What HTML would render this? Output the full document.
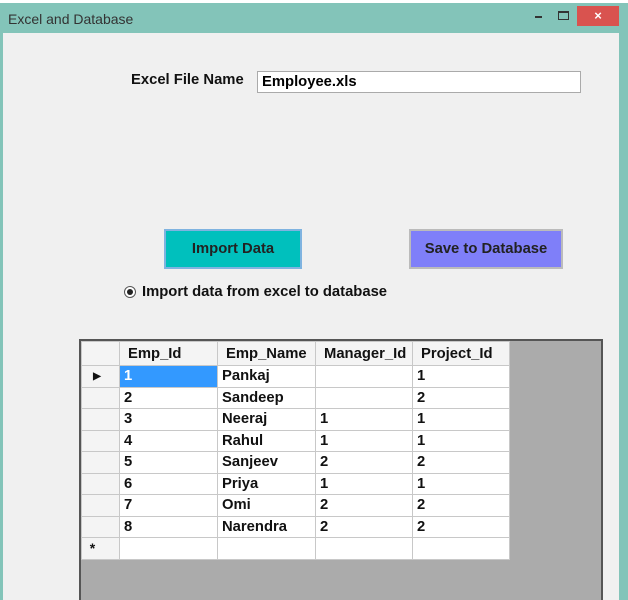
<!DOCTYPE html>
<html><head><style>
body{margin:0;width:628px;height:600px;overflow:hidden;background:#fff;font-family:"Liberation Sans",sans-serif;position:relative}
.win{position:absolute;left:0;top:3px;width:628px;height:597px;background:#83c4b9}
.title{position:absolute;left:8px;top:8px;font-size:14px;color:#333}
.content{position:absolute;left:3px;top:33px;width:616px;height:567px;background:#f0f0f0}
.close{position:absolute;left:577px;top:3px;width:42px;height:20px;background:#d9534f;color:#fff;font-size:13px;text-align:center;line-height:20px;font-weight:bold}
.min{position:absolute;left:535px;top:13px;width:7px;height:2px;background:#333}
.max{position:absolute;left:558px;top:8px;width:9px;height:6px;border:1px solid #333;border-top-width:2px}
.lbl{position:absolute;font-weight:bold;font-size:14.8px;color:#111}
.input{position:absolute;left:257px;top:71px;width:324px;height:22px;background:#fff;border:1px solid #aaa;box-sizing:border-box;font-weight:bold;font-size:14.8px;padding:2px 0 0 4px}
.btn{position:absolute;box-sizing:border-box;font-weight:bold;font-size:14.8px;text-align:center;color:#222}
.grid{position:absolute;left:79px;top:339px;width:524px;height:261px;background:#ababab;border:2px solid #555;border-bottom:none;box-sizing:border-box}
table{border-collapse:collapse;position:absolute;left:0;top:0}
td{border:1px solid #c8c8c8;background:#fff;height:21.5px;padding:0 0 0 4px;font-weight:bold;font-size:14.8px;color:#111;box-sizing:border-box}
tr.h td{background:#f4f4f4;padding-left:8px}
td.rh{width:38px;background:#f4f4f4;padding:0;text-align:left;font-size:10px}
</style></head><body>
<div class="win">
<div class="title">Excel and Database</div>
<div class="min"></div><div class="max"></div>
<div class="close">×</div>
</div>
<div class="content"></div>
<div class="lbl" style="left:131px;top:72px">Excel File Name</div>
<div class="input">Employee.xls</div>
<div class="btn" style="left:164px;top:229px;width:138px;height:40px;background:#00c0bd;border:2px solid #7fb3e0;line-height:36px">Import Data</div>
<div class="btn" style="left:409px;top:229px;width:154px;height:40px;background:#7f7ff9;border:2px solid #bbb;line-height:36px">Save to Database</div>
<div style="position:absolute;left:124px;top:286px;width:12px;height:12px;border:1px solid #555;border-radius:50%;background:#fff;box-sizing:border-box"><div style="position:absolute;left:2px;top:2px;width:6px;height:6px;border-radius:50%;background:#222"></div></div>
<div class="lbl" style="left:142px;top:284px">Import data from excel to database</div>
<div class="grid">
<table>
<tr class="h"><td class="rh" style="height:24px"></td><td style="width:98px;height:24px">Emp_Id</td><td style="width:98px;height:24px">Emp_Name</td><td style="width:97px;height:24px">Manager_Id</td><td style="width:97px;height:24px">Project_Id</td></tr>
<tr><td class="rh">&nbsp;&nbsp;&nbsp;&nbsp;▶</td><td style="background:#3399ff;color:#fff">1</td><td>Pankaj</td><td></td><td>1</td></tr>
<tr><td class="rh"></td><td>2</td><td>Sandeep</td><td></td><td>2</td></tr>
<tr><td class="rh"></td><td>3</td><td>Neeraj</td><td>1</td><td>1</td></tr>
<tr><td class="rh"></td><td>4</td><td>Rahul</td><td>1</td><td>1</td></tr>
<tr><td class="rh"></td><td>5</td><td>Sanjeev</td><td>2</td><td>2</td></tr>
<tr><td class="rh"></td><td>6</td><td>Priya</td><td>1</td><td>1</td></tr>
<tr><td class="rh"></td><td>7</td><td>Omi</td><td>2</td><td>2</td></tr>
<tr><td class="rh"></td><td>8</td><td>Narendra</td><td>2</td><td>2</td></tr>
<tr><td class="rh" style="font-size:14px">&nbsp;&nbsp;*</td><td></td><td></td><td></td><td></td></tr>
</table>
</div>
</body></html>
